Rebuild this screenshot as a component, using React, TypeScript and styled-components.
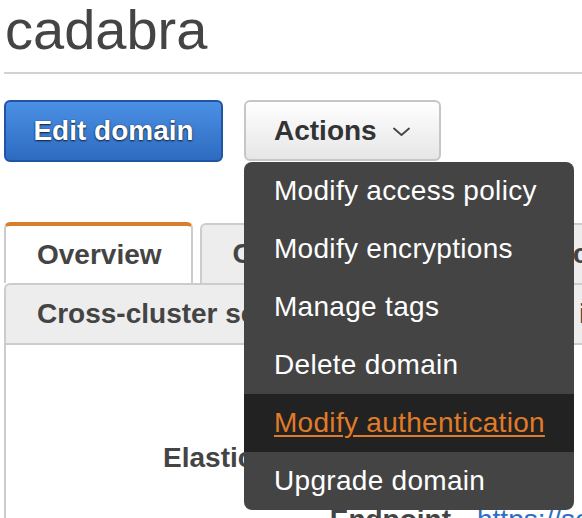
import React from "react";
import styled, { createGlobalStyle } from "styled-components";

const GlobalStyle = createGlobalStyle`
  html, body {
    margin: 0;
    padding: 0;
    background: #ffffff;
    overflow: hidden;
  }
  body {
    font-family: "Liberation Sans", Arial, Helvetica, sans-serif;
    color: #444444;
  }
  * { box-sizing: border-box; }
`;

const Page = styled.div`
  width: 582px;
  height: 518px;
  overflow: hidden;
  padding-left: 4px;
`;

const Title = styled.h1`
  margin: 0;
  font-size: 56px;
  line-height: 60px;
  font-weight: 400;
  color: #444444;
  padding-left: 1px;
`;

const Rule = styled.div`
  height: 2px;
  margin-top: 12px;
  background: #d2d2d2;
`;

const Toolbar = styled.div`
  display: flex;
  gap: 21px;
  margin-top: 26px;
  align-items: flex-start;
`;

const PrimaryButton = styled.button`
  width: 219px;
  height: 62px;
  border: 2px solid #1f55a3;
  border-radius: 6px;
  background: linear-gradient(#4b90e4, #2d6bc1);
  color: #ffffff;
  font-family: inherit;
  font-size: 28px;
  font-weight: 700;
  text-shadow: 0 1px 2px rgba(0, 0, 0, 0.75), 0 0 1px rgba(0, 0, 0, 0.6);
  padding: 0;
  cursor: pointer;
`;

const ActionsWrap = styled.div`
  position: relative;
`;

const SecondaryButton = styled.button`
  width: 197px;
  height: 61px;
  border: 2px solid #c6c6c6;
  border-radius: 6px;
  background: linear-gradient(#ffffff, #e6e6e6);
  color: #333333;
  font-family: inherit;
  font-size: 28px;
  font-weight: 700;
  display: flex;
  align-items: center;
  gap: 16px;
  padding: 0 0 0 28px;
  cursor: pointer;
`;

const Chevron = styled.svg`
  width: 17px;
  height: 9px;
  margin-top: 2px;
`;

const Menu = styled.ul`
  position: absolute;
  top: 62px;
  left: 0;
  width: 330px;
  margin: 0;
  padding: 0;
  list-style: none;
  background: #444444;
  border-radius: 8px;
  overflow: hidden;
  z-index: 10;
`;

const MenuItem = styled.li<{ $active?: boolean }>`
  height: 58px;
  display: flex;
  align-items: center;
  padding-left: 30px;
  font-size: 28px;
  letter-spacing: 0.3px;
  white-space: nowrap;
  color: ${(p) => (p.$active ? "#e07b27" : "#ffffff")};
  background: ${(p) => (p.$active ? "#222222" : "transparent")};
  text-decoration: ${(p) => (p.$active ? "underline" : "none")};
  text-underline-offset: 3px;
  text-decoration-thickness: 2px;
`;

const Tabs = styled.div`
  margin-top: 60px;
`;

const TabRow = styled.div`
  display: flex;
  gap: 7px;
  align-items: flex-end;
  white-space: nowrap;
`;

const Tab = styled.div<{ $active?: boolean; $h: number }>`
  flex: none;
  height: ${(p) => p.$h}px;
  display: flex;
  align-items: center;
  padding: 0 29px 0 31px;
  font-size: 28px;
  font-weight: 700;
  color: #444444;
  background: ${(p) => (p.$active ? "#ffffff" : "#ededed")};
  border: 2px solid #cccccc;
  border-top: ${(p) => (p.$active ? "4px solid #d97e2c" : "2px solid #cccccc")};
  border-bottom: none;
  border-radius: 6px 6px 0 0;
`;

const Panel = styled.div`
  border-left: 2px solid #cccccc;
  border-top: 2px solid #cccccc;
  padding-top: 96px;
  display: grid;
  grid-template-columns: 445px max-content;
  column-gap: 26px;
  row-gap: 28px;
`;

const Label = styled.div`
  text-align: right;
  font-size: 28px;
  line-height: 34px;
  font-weight: 700;
  color: #444444;
  white-space: nowrap;
`;

const Value = styled.div`
  font-size: 28px;
  line-height: 34px;
  color: #444444;
  white-space: nowrap;
`;

const Link = styled.a`
  color: #2a6fc4;
  text-decoration: none;
`;

const menuItems = [
  "Modify access policy",
  "Modify encryptions",
  "Manage tags",
  "Delete domain",
  "Modify authentication",
  "Upgrade domain",
];

export default function App() {
  return (
    <>
      <GlobalStyle />
      <Page>
        <Title>cadabra</Title>
        <Rule />
        <Toolbar>
          <PrimaryButton>Edit domain</PrimaryButton>
          <ActionsWrap>
            <SecondaryButton>
              Actions
              <Chevron viewBox="0 0 17 9" fill="none">
                <path d="M1 1.5 L8.5 8 L16 1.5" stroke="#444" strokeWidth="1.8" strokeLinecap="round" strokeLinejoin="round" />
              </Chevron>
            </SecondaryButton>
            <Menu>
              {menuItems.map((m) => (
                <MenuItem key={m} $active={m === "Modify authentication"}>
                  {m}
                </MenuItem>
              ))}
            </Menu>
          </ActionsWrap>
        </Toolbar>
        <Tabs>
          <TabRow>
            <Tab $active $h={61}>Overview</Tab>
            <Tab $h={60}>Cluster health</Tab>
            <Tab $h={60}>Instance health</Tab>
          </TabRow>
          <TabRow>
            <Tab $h={60}>Cross-cluster search</Tab>
            <Tab $h={60}>Logs</Tab>
            <Tab $h={60}>Old indices</Tab>
          </TabRow>
          <Panel>
            <Label>Elasticsearch version</Label>
            <Value>7.9</Value>
            <Label>Endpoint</Label>
            <Value>
              <Link href="#">https://search-cadabra.es.amazonaws.com</Link>
            </Value>
          </Panel>
        </Tabs>
      </Page>
    </>
  );
}
